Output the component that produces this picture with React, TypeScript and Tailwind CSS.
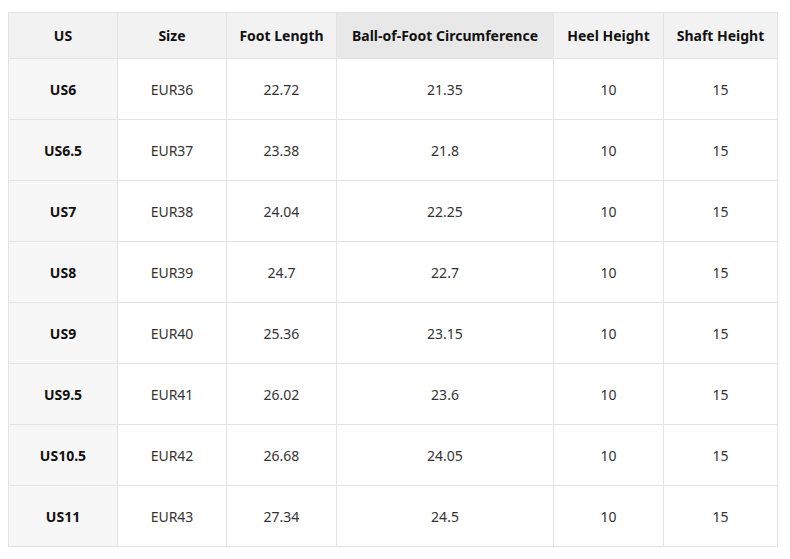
const headers = [
  "US",
  "Size",
  "Foot Length",
  "Ball-of-Foot Circumference",
  "Heel Height",
  "Shaft Height",
];

const rows = [
  ["US6", "EUR36", "22.72", "21.35", "10", "15"],
  ["US6.5", "EUR37", "23.38", "21.8", "10", "15"],
  ["US7", "EUR38", "24.04", "22.25", "10", "15"],
  ["US8", "EUR39", "24.7", "22.7", "10", "15"],
  ["US9", "EUR40", "25.36", "23.15", "10", "15"],
  ["US9.5", "EUR41", "26.02", "23.6", "10", "15"],
  ["US10.5", "EUR42", "26.68", "24.05", "10", "15"],
  ["US11", "EUR43", "27.34", "24.5", "10", "15"],
];

const widths = ["w-[109px]", "w-[109px]", "w-[110px]", "w-[217px]", "w-[110px]", "w-[114px]"];

export default function App() {
  return (
    <div className="min-h-screen bg-white pl-[8px] pt-[12px] font-['Segoe_UI','Noto_Sans','Open_Sans',sans-serif] text-[14px]">
      <table className="w-[770px] table-fixed border-collapse">
        <thead>
          <tr className="h-[46px]">
            {headers.map((h, i) => (
              <th
                key={h}
                className={`${widths[i]} border border-[#e3e3e3] font-bold text-[#111] text-center ${
                  i === 3 ? "bg-[#e8e8e8]" : "bg-[#f2f2f2]"
                }`}
              >
                {h}
              </th>
            ))}
          </tr>
        </thead>
        <tbody>
          {rows.map((r) => (
            <tr key={r[0]} className="h-[61px]">
              {r.map((c, i) =>
                i === 0 ? (
                  <td
                    key={i}
                    className="border border-[#e3e3e3] bg-[#f7f7f7] text-center font-bold text-[#111]"
                  >
                    {c}
                  </td>
                ) : (
                  <td key={i} className="border border-[#e3e3e3] bg-white text-center text-[#333]">
                    {c}
                  </td>
                )
              )}
            </tr>
          ))}
        </tbody>
      </table>
    </div>
  );
}
